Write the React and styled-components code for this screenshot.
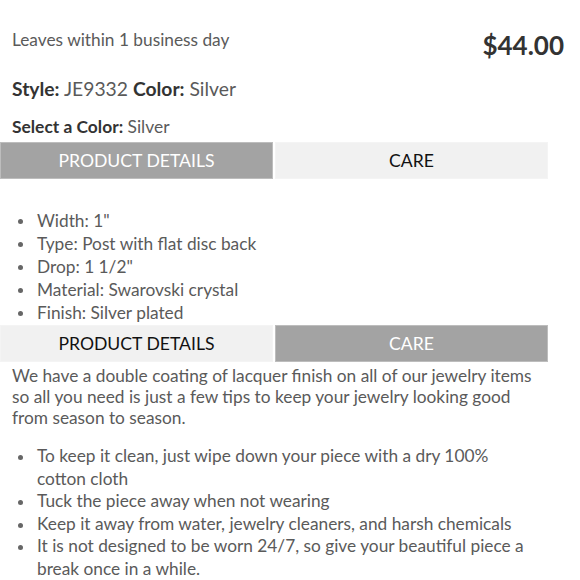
import React from "react";
import styled, { createGlobalStyle } from "styled-components";

const GlobalStyle = createGlobalStyle`
  body {
    margin: 0;
    background: #fff;
    font-family: Lato, "Open Sans", sans-serif;
    color: #555;
  }
`;

const Page = styled.div`
  width: 580px;
  height: 580px;
  overflow: hidden;
`;

const Header = styled.div`
  display: flex;
  justify-content: space-between;
  align-items: flex-start;
  padding: 28px 16px 0 12px;
`;

const Leaves = styled.div`
  font-size: 17.3px;
  color: #5a5a5a;
  line-height: 24px;
`;

const Price = styled.div`
  font-size: 26px;
  font-weight: 700;
  color: #333;
  line-height: 30px;
  margin-top: 2px;
`;

const Info = styled.div`
  padding: 0 12px;
  font-size: ${(p) => p.size}px;
  line-height: 24px;
  color: #5a5a5a;
  margin-top: ${(p) => p.top}px;

  b {
    color: #333;
    font-weight: 700;
  }
`;

const Tabs = styled.div`
  display: grid;
  grid-template-columns: 273px 273px;
  gap: 2px;
  width: 548px;
  margin-top: ${(p) => p.top}px;
`;

const Tab = styled.div`
  height: 37px;
  display: flex;
  align-items: center;
  justify-content: center;
  font-size: 17.6px;
  background: ${(p) => (p.active ? "#a3a3a3" : "#f1f1f1")};
  color: ${(p) => (p.active ? "#fff" : "#111")};
  border: 1px solid ${(p) => (p.active ? "#bdbdbd" : "#f4f4f4")};
  box-sizing: border-box;
`;

const List = styled.ul`
  margin: ${(p) => p.top}px 0 0 0;
  padding: 0 0 0 37px;
  width: ${(p) => p.w}px;
  box-sizing: border-box;
  list-style: none;
  font-size: 17.3px;
  line-height: ${(p) => p.lh}px;
  color: #5a5a5a;
`;

const Item = styled.li`
  position: relative;

  &::before {
    content: "";
    position: absolute;
    left: -19px;
    top: ${(p) => p.dot}px;
    width: 5px;
    height: 5px;
    border-radius: 50%;
    background: #666;
  }
`;

const Para = styled.p`
  margin: 3px 0 0 12px;
  width: 525px;
  font-size: 17.3px;
  line-height: 21px;
  color: #5a5a5a;
`;

const Rule = styled.div`
  width: 550px;
  height: 1px;
  background: #ececec;
  margin-top: 2px;
`;

const details = [
  'Width: 1"',
  "Type: Post with flat disc back",
  'Drop: 1 1/2"',
  "Material: Swarovski crystal",
  "Finish: Silver plated",
];

const care = [
  "To keep it clean, just wipe down your piece with a dry 100% cotton cloth",
  "Tuck the piece away when not wearing",
  "Keep it away from water, jewelry cleaners, and harsh chemicals",
  "It is not designed to be worn 24/7, so give your beautiful piece a break once in a while.",
];

export default function App() {
  return (
    <Page>
      <GlobalStyle />
      <Header>
        <Leaves>Leaves within 1 business day</Leaves>
        <Price>$44.00</Price>
      </Header>
      <Info size={19.3} top={17}>
        <b>Style:</b> JE9332 <b>Color:</b> Silver
      </Info>
      <Info size={17.4} top={14}>
        <b>Select a Color:</b> Silver
      </Info>
      <Tabs top={3}>
        <Tab active>PRODUCT DETAILS</Tab>
        <Tab>CARE</Tab>
      </Tabs>
      <List top={30} lh={23} w={548}>
        {details.map((d) => (
          <Item key={d} dot={10}>{d}</Item>
        ))}
      </List>
      <Tabs top={1}>
        <Tab>PRODUCT DETAILS</Tab>
        <Tab active>CARE</Tab>
      </Tabs>
      <Para>
        We have a double coating of lacquer finish on all of our jewelry items so all you need is just a few tips to keep your jewelry looking good from season to season.
      </Para>
      <List top={17} lh={22.5} w={528}>
        {care.map((c) => (
          <Item key={c} dot={10}>{c}</Item>
        ))}
      </List>
      <Rule />
    </Page>
  );
}
